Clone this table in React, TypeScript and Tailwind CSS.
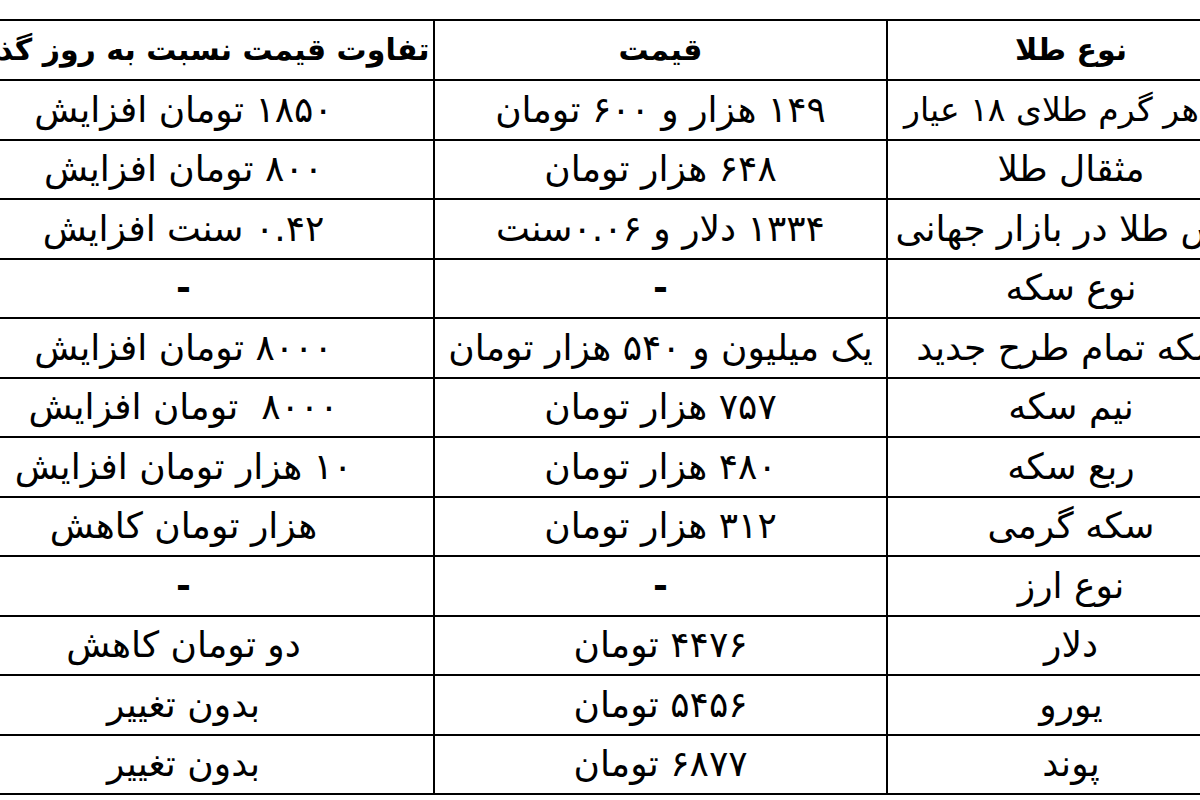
import React from "react";

type Row = [string, string, string];

// [نوع, قیمت, تفاوت]
const rows: Row[] = [
  ["قیمت هر گرم طلای ۱۸ عیار", "۱۴۹ هزار و ۶۰۰ تومان", "۱۸۵۰ تومان افزایش"],
  ["مثقال طلا", "۶۴۸ هزار تومان", "۸۰۰ تومان افزایش"],
  ["انس طلا در بازار جهانی", "۱۳۳۴ دلار و ۰.۰۶سنت", "۰.۴۲ سنت افزایش"],
  ["نوع سکه", "-", "-"],
  ["سکه تمام طرح جدید", "یک میلیون و ۵۴۰ هزار تومان", "۸۰۰۰ تومان افزایش"],
  ["نیم سکه", "۷۵۷ هزار تومان", "۸۰۰۰  تومان افزایش"],
  ["ربع سکه", "۴۸۰ هزار تومان", "۱۰ هزار تومان افزایش"],
  ["سکه گرمی", "۳۱۲ هزار تومان", "هزار تومان کاهش"],
  ["نوع ارز", "-", "-"],
  ["دلار", "۴۴۷۶ تومان", "دو تومان کاهش"],
  ["یورو", "۵۴۵۶ تومان", "بدون تغییر"],
  ["پوند", "۶۸۷۷ تومان", "بدون تغییر"],
];

const cell = "border-2 border-black text-center align-middle whitespace-pre px-0";

const Value = ({ text }: { text: string }) => (
  <td className={`${cell} ${text === "-" ? "font-bold" : ""}`}>{text}</td>
);

const App = () => {
  return (
    <div className="w-[1200px] h-[800px] overflow-hidden bg-white pt-[19px] font-['DejaVu_Sans',sans-serif] text-black">
      <table dir="rtl" className="ml-[-68px] w-[1322px] table-fixed border-collapse text-[36px] leading-none">
        <colgroup>
          <col className="w-[368px]" />
          <col className="w-[453px]" />
          <col className="w-[501px]" />
        </colgroup>
        <thead>
          <tr className="h-[60px]">
            <th className={`${cell} font-bold text-[30px]`}>نوع طلا</th>
            <th className={`${cell} font-bold text-[30px]`}>قیمت</th>
            <th className={`${cell} font-bold text-[30px]`}>تفاوت قیمت نسبت به روز گذشته</th>
          </tr>
        </thead>
        <tbody>
          {rows.map((r, i) => (
            <tr key={i} className="h-[59.5px]">
              {i === 0 ? (
                // too long for the column: ends near the left border, runs off to the right
                <td className={`${cell} overflow-hidden pl-[16px]`}>
                  <div className="flex justify-end whitespace-pre text-[33px]">{r[0]}</div>
                </td>
              ) : (
                <td className={`${cell} overflow-hidden`}>{r[0]}</td>
              )}
              <Value text={r[1]} />
              <Value text={r[2]} />
            </tr>
          ))}
        </tbody>
      </table>
    </div>
  );
};

export default App;
